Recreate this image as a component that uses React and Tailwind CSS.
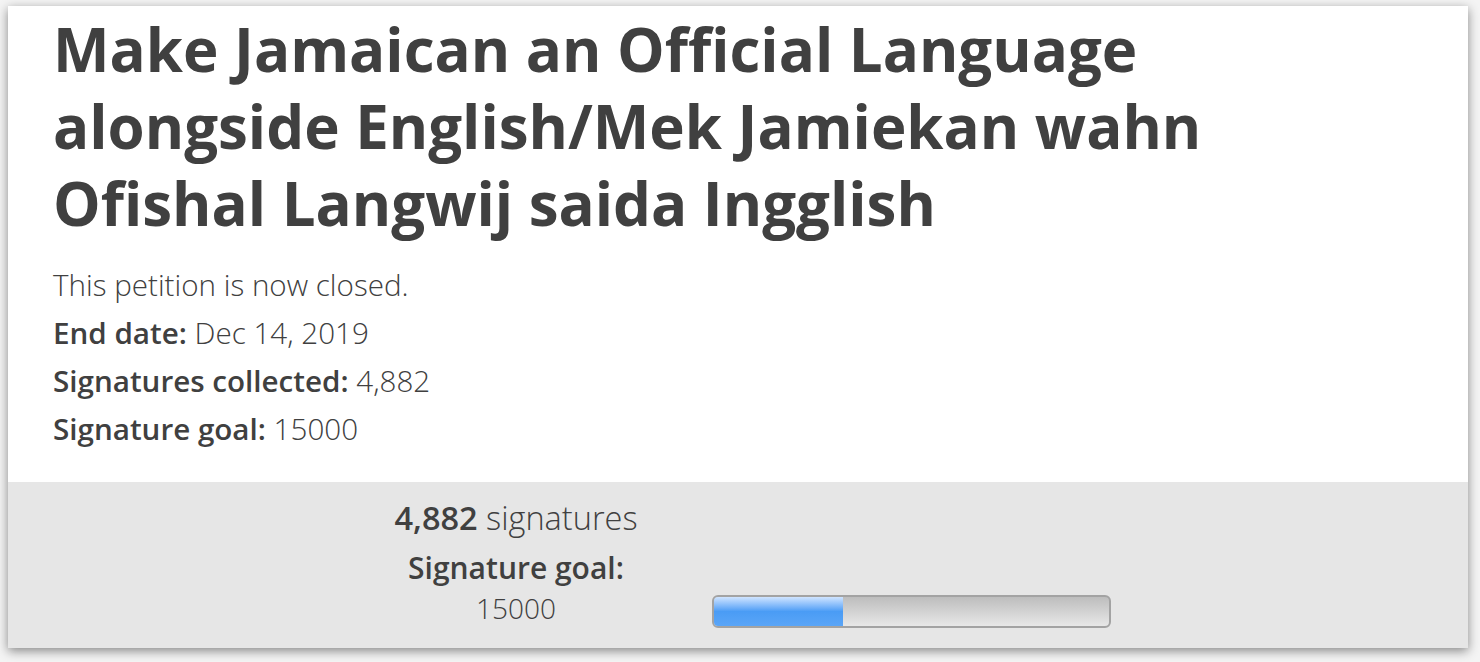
export default function App() {
  const collected = 4882;
  const goal = 15000;
  const pct = (collected / goal) * 100;

  return (
    <div className="min-h-[662px] bg-[#f4f4f4] pt-[6px] pl-[8px] pr-[12px] pb-[14px] font-['Open_Sans',sans-serif] text-[#404040]">
      <div className="bg-white shadow-[0_3px_10px_rgba(0,0,0,0.45)]">
        <div className="px-[45px] pb-[29px]">
          <h1 className="text-[60px] font-bold leading-[77px] pt-[5px]">
            Make Jamaican an Official Language
            <br />
            alongside English/Mek Jamiekan wahn
            <br />
            Ofishal Langwij saida Ingglish
          </h1>
          <div className="mt-[19px] text-[29.6px] font-light leading-[48px]">
            <p>This petition is now closed.</p>
            <p>
              <span className="font-semibold">End date:</span> Dec 14, 2019
            </p>
            <p>
              <span className="font-semibold">Signatures collected:</span> 4,882
            </p>
            <p>
              <span className="font-semibold">Signature goal:</span> 15000
            </p>
          </div>
        </div>
        <div className="bg-[#e6e6e6] h-[166px] flex items-start">
          <div className="w-[700px] flex flex-col items-center pl-[316px] pt-[14px] font-light">
            <p className="text-[32.5px] leading-[44px]">
              <span className="font-semibold">4,882</span> signatures
            </p>
            <p className="text-[30px] font-semibold leading-[44px] mt-[6px]">Signature goal:</p>
            <p className="text-[28px] leading-[36px]">15000</p>
          </div>
          <div className="ml-[4px] mt-[113px] w-[399px] h-[33px] rounded-[6px] border-2 border-[#a3a3a3] bg-gradient-to-b from-[#bdbdbd] to-[#e8e8e8] overflow-hidden">
            <div
              className="h-full bg-gradient-to-b from-[#cfe4ff] via-[#4a9cf5] to-[#5aa5f7]"
              style={{ width: pct + "%" }}
            />
          </div>
        </div>
      </div>
    </div>
  );
}
